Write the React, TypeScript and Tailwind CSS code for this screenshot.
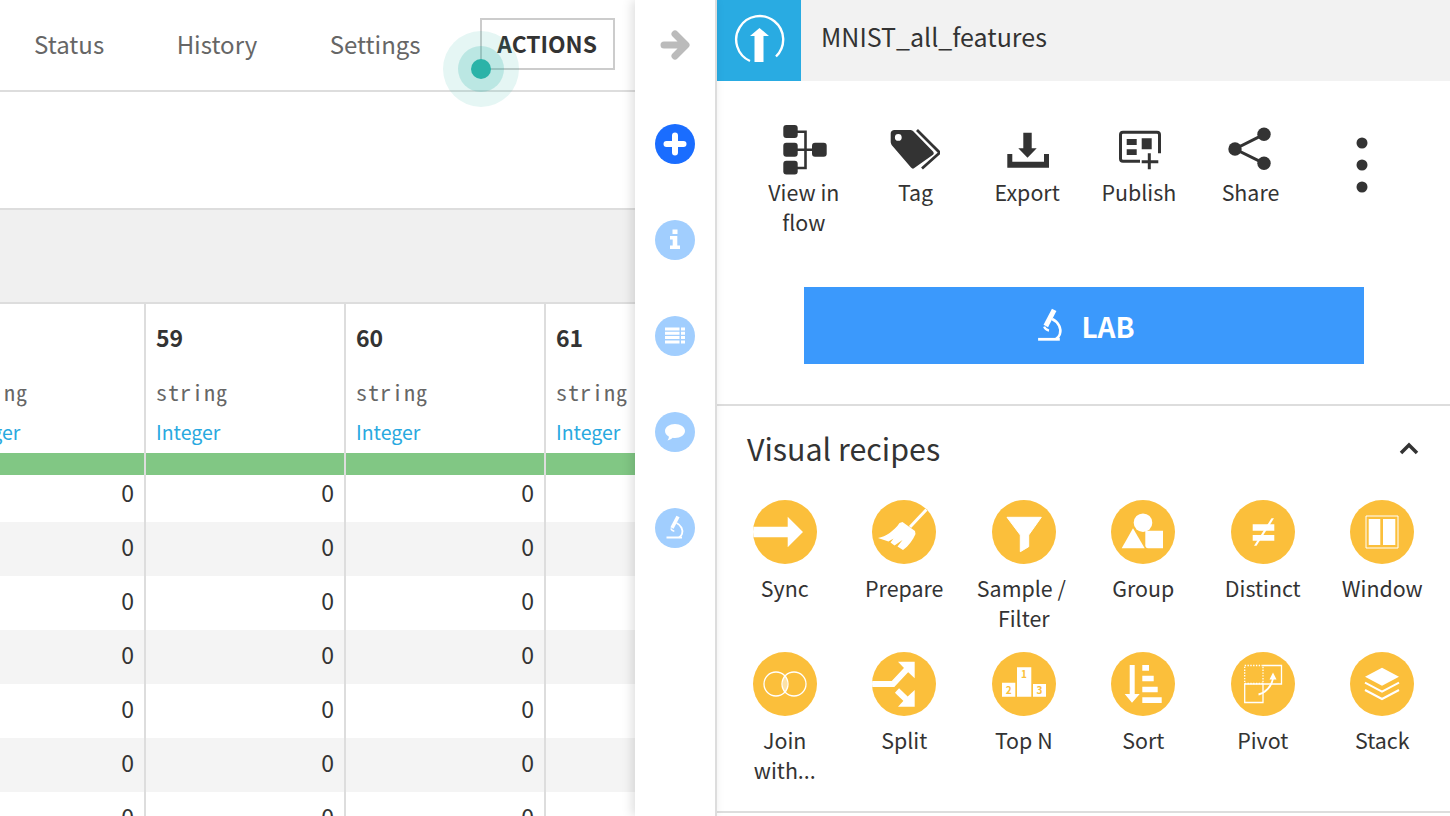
import { ReactNode } from 'react';

const sans = 'font-["Noto_Sans_CJK_SC","Noto_Sans",sans-serif]';

function Microscope({ className }: { className?: string }) {
  return (
    <svg viewBox="0 0 40 40" className={className} fill="none" stroke="#fff">
      <path d="M23 8.500 17 20" strokeWidth="3.600" />
      <path d="M21.500 15c4.500 2 7 7 5.500 11-.5 1.500-1.500 2.500-3 3.500" strokeWidth="1.800" />
      <path d="M15.800 20.500c.6 1.500 2 2.500 3.500 2.800" strokeWidth="1.600" />
      <path d="M11.500 29.500H27" strokeWidth="2" />
    </svg>
  );
}

function FlowIcon() {
  return (
    <svg viewBox="0 0 50 50" className="h-[50px] w-[50px]" fill="#333">
      <rect x="4.300" y="0" width="14.400" height="13" rx="3" />
      <rect x="4.300" y="17.700" width="14.400" height="14" rx="3" />
      <rect x="4.300" y="35.700" width="14.400" height="13.700" rx="3" />
      <rect x="33" y="17.700" width="14.700" height="14" rx="3" />
      <path d="M18 6.700h8.500v36.300H18M18 24.700h16" fill="none" stroke="#333" strokeWidth="2.600" />
    </svg>
  );
}

function TagIcon() {
  return (
    <svg viewBox="0 0 50 50" className="h-[50px] w-[50px]">
      <path
        fillRule="evenodd"
        fill="#333"
        d="M4.500 5h15.500c1.500 0 2.500.5 3.500 1.500l19.500 20c1 1.200 1 2.300 0 3.300L25 42.500c-1.300 1.500-2.800 1.500-4 0L2.500 21C1.200 19.500.7 18 .7 16.500V8.500C.7 6.300 2.300 5 4.500 5Zm3.800 4a3.400 3.400 0 1 0 0 6.800 3.400 3.400 0 0 0 0-6.800Z"
      />
      <path d="M27 5l21.500 21.500c.8.900.8 1.500 0 2.300L32 43.500" fill="none" stroke="#333" strokeWidth="2.800" />
    </svg>
  );
}

function ExportIcon() {
  return (
    <svg viewBox="0 0 50 50" className="h-[50px] w-[50px]" fill="#333">
      <path d="M21.300 7.700h8.400v15.600h5L25.500 32.700l-9.200-9.400h5Z" />
      <path d="M5.300 29h5v7.700h31.700V29h5v13.700H5.300Z" />
    </svg>
  );
}

function PublishIcon() {
  return (
    <svg viewBox="0 0 50 50" className="h-[50px] w-[50px]">
      <path d="M26 36.200H9c-1.500 0-2.500-1-2.500-2.500V9.700C6.500 8.200 7.500 7.200 9 7.200h34c1.500 0 2.500 1 2.500 2.500v18.600" fill="none" stroke="#333" strokeWidth="3" />
      <path d="M12.700 14h10v6h-10ZM27.700 13.300h10v11h-10ZM12.700 24.300h10V30h-10Z" fill="#333" />
      <path d="M35.300 28.300v16M27.700 36.700h16.600" stroke="#333" strokeWidth="3" />
    </svg>
  );
}

function ShareIcon() {
  return (
    <svg viewBox="0 0 50 50" className="h-[50px] w-[50px]" fill="#333">
      <path d="M39 9.300 10 24l29 14.300" fill="none" stroke="#333" strokeWidth="3" />
      <circle cx="39" cy="9.300" r="6.700" />
      <circle cx="10" cy="24" r="6.700" />
      <circle cx="39" cy="38.300" r="6.700" />
    </svg>
  );
}

function MoreIcon() {
  return (
    <svg viewBox="0 0 50 60" className="h-[60px] w-[50px]" fill="#333">
      <circle cx="25" cy="8" r="5.500" />
      <circle cx="25" cy="30" r="5.500" />
      <circle cx="25" cy="52" r="5.500" />
    </svg>
  );
}

const recipes: { label: string; width: string; icon: ReactNode }[] = [
  { label: 'Sync', width: 'w-[112px]', icon: <path d="M0 26.700h34.700v-10L50 32 34.700 47.300v-10H0Z" fill="#fff" /> },
  {
    label: 'Prepare',
    width: 'w-[112px]',
    icon: (
      <g fill="#fff">
        <path d="M54.500 9.500 38 27" stroke="#fff" strokeWidth="3" />
        <path d="M6 38c8-1.500 16-7 21.500-15l3-1 12.500 9 .5 3c-2.500 6-7 12-12.500 16l-5.500-3.500 5-6.500-8 5.500-4-3 3-4-5 3Z" />
      </g>
    ),
  },
  {
    label: 'Sample /\u00a0 Filter',
    width: 'w-[112px]',
    icon: <path d="M15 17.300h34.300l-12.600 17.700v11.700l-8.400 5V35Z" fill="#fff" stroke="#fff" strokeLinejoin="round" />,
  },
  {
    label: 'Group',
    width: 'w-[112px]',
    icon: (
      <g fill="#fff">
        <circle cx="32" cy="22.700" r="9.300" />
        <path d="M10.700 48.300 22 28.300l11.700 20Z" />
        <path d="M34.300 30.700H52v17.600H37c-1.500 0-2.700-1.200-2.700-2.700Z" />
      </g>
    ),
  },
  {
    label: 'Distinct',
    width: 'w-[112px]',
    icon: (
      <g>
        <path d="M21.700 24.300h21.600v6.400H21.700ZM21.700 35h21.600v5.700H21.700Z" fill="#fff" />
        <path d="M40.500 18.300h2.500L25.500 45.700H23Z" fill="#fff" />
      </g>
    ),
  },
  {
    label: 'Window',
    width: 'w-[112px]',
    icon: (
      <g fill="#fff">
        <path d="M16 16h32v32H16Z" fill="none" stroke="#fff" />
        <path d="M18.700 19h11.600v26H18.700ZM33 19h12.300v26H33Z" />
      </g>
    ),
  },
  {
    label: 'Join with...',
    width: 'w-[80px]',
    icon: (
      <g>
        <path d="M32 22.500c-3.400 2.400-3.400 16.600 0 19 3.400-2.400 3.400-16.600 0-19Z" fill="#fff" opacity=".55" />
        <g fill="none" stroke="#fff" strokeWidth="1.300">
          <circle cx="23" cy="32" r="12" />
          <circle cx="41" cy="32" r="12" />
        </g>
      </g>
    ),
  },
  {
    label: 'Split',
    width: 'w-[112px]',
    icon: (
      <g fill="#fff">
        <path d="M0 32h21L36 16" fill="none" stroke="#fff" strokeWidth="6" />
        <path d="M26 9.700h16.700v16.600L36.500 20.500 32 16Z" />
        <path d="M25 38.500 38 51" fill="none" stroke="#fff" strokeWidth="6" />
        <path d="M42.700 38v16.700H26l5.500-6 5-5Z" />
      </g>
    ),
  },
  {
    label: 'Top N',
    width: 'w-[112px]',
    icon: (
      <g>
        <path d="M10 30.700h13.300v14H10ZM25 15.300h14.300v29.400H25ZM41 32h13v12.700H41Z" fill="#fff" />
        <g fill="#fbbf3b" fontSize="10" fontWeight="700" textAnchor="middle" fontFamily="Noto Sans CJK SC, sans-serif">
          <text x="32" y="26">1</text>
          <text x="16.700" y="42">2</text>
          <text x="47.500" y="42">3</text>
        </g>
      </g>
    ),
  },
  {
    label: 'Sort',
    width: 'w-[112px]',
    icon: (
      <path d="M18.700 13h5v29h5L21 50.700 13.700 42h5ZM31.300 13H38v5.700h-6.700ZM31.300 23.700h11.400v5.600H31.300ZM31.300 34.700h15.400v5.600H31.300ZM31.300 45.300h19.400V51H31.300Z" fill="#fff" />
    ),
  },
  {
    label: 'Pivot',
    width: 'w-[112px]',
    icon: (
      <g fill="none" stroke="#fff" strokeWidth="1.300">
        <path d="M13.700 13.500h18.300v18H13.700Z" strokeDasharray="1.400 1.400" />
        <path d="M32 13.500h18.500V32H32" />
        <path d="M32 32v18.500H13.700V32Z" />
        <path d="M27.500 42.500c7-1.500 13-8 14.500-16" strokeWidth="1.800" />
        <path d="M38.500 27.500 42 20.500l3.500 7Z" fill="#fff" stroke="none" />
      </g>
    ),
  },
  {
    label: 'Stack',
    width: 'w-[112px]',
    icon: (
      <g fill="#fff">
        <path d="M32 15.700 49 24.700 32 33.700 15 24.700Z" />
        <path d="M15 30.700 32 39.700 49 30.700M15 38 32 47 49 38" fill="none" stroke="#fff" strokeWidth="2" />
      </g>
    ),
  },
];

const actions: { label: string; icon: ReactNode }[] = [
  { label: 'View in flow', icon: <FlowIcon /> },
  { label: 'Tag', icon: <TagIcon /> },
  { label: 'Export', icon: <ExportIcon /> },
  { label: 'Publish', icon: <PublishIcon /> },
  { label: 'Share', icon: <ShareIcon /> },
];

const columns = ['58', '59', '60', '61'];
const rows = [0, 1, 2, 3, 4, 5, 6];

function SideButton({ active, children }: { active?: boolean; children: ReactNode }) {
  return (
    <div className={`flex h-10 w-10 items-center justify-center rounded-full ${active ? 'bg-[#1a6dff]' : 'bg-[#a1cefe]'}`}>
      <svg viewBox="0 0 40 40" className="h-10 w-10">
        {children}
      </svg>
    </div>
  );
}

export default function App() {
  return (
    <div className={`flex h-[816px] w-[1450px] overflow-hidden bg-white text-[#333] ${sans}`}>
      {/* dataset table */}
      <div className="relative h-full w-[635px] shrink-0 overflow-hidden">
        <div className="flex h-[92px] items-start border-b-2 border-[#ddd] pl-[34px] pt-[18px]">
          <div className="flex h-[52px] items-center gap-[72.500px] text-[24px] text-[#666]">
            <span>Status</span>
            <span>History</span>
            <span>Settings</span>
          </div>
          <div className="ml-[59px] flex h-[52px] w-[135px] items-center justify-center border-2 border-[#ccc] text-[22.800px] font-semibold text-[#333]">
            ACTIONS
          </div>
        </div>

        <div className="h-[118px] border-b-2 border-[#ddd]" />
        <div className="h-[94px] border-b-2 border-[#ddd] bg-[#f0f0f0]" />

        <div className="-ml-[54px] grid w-[800px] grid-cols-[200px_200px_200px_200px]">
          {columns.map((col) => (
            <div key={col} className="flex h-[149px] flex-col border-r-2 border-[#ddd] pl-[10px]">
              <span className="mt-[18px] h-[30px] text-[23px] leading-[30px] font-semibold">{col === '58' ? '' : col}</span>
              <span className="mt-[24px] h-[30px] font-['Noto_Sans_Mono_CJK_SC','DejaVu_Sans_Mono',monospace] text-[22px] leading-[30px] tracking-[1px] text-[#666]">
                string
              </span>
              <span className="mt-[11px] text-[19.500px] leading-[30px] text-[#29a9e0]">Integer</span>
            </div>
          ))}
          {columns.map((col) => (
            <div key={col} className="h-[22px] border-r-2 border-[#ddd] bg-[#81c784]" />
          ))}
        </div>

        <div className="-ml-[54px] h-[341px] w-[800px] overflow-hidden">
          {rows.map((row) => (
            <div
              key={row}
              className={`grid grid-cols-[200px_200px_200px_200px] ${row === 0 ? 'h-[47px]' : 'h-[54px]'} ${row % 2 === 1 ? 'bg-[#f4f4f4]' : 'bg-white'}`}
            >
              {columns.map((col, i) => (
                <div
                  key={col}
                  className={`border-r-2 border-[#ddd] pr-[10px] text-right text-[23px] leading-[36px] ${row === 0 ? '-mt-[1px]' : 'pt-[6px]'}`}
                >
                  {i === 3 ? '' : '0'}
                </div>
              ))}
            </div>
          ))}
        </div>

        {/* pulse marker over the actions button */}
        <div className="absolute left-[443px] top-[31px] flex h-[76px] w-[76px] items-center justify-center rounded-full bg-[#2bb3a8]/12">
          <div className="flex h-[46px] w-[46px] items-center justify-center rounded-full bg-[#2bb3a8]/22">
            <div className="h-[20px] w-[20px] rounded-full bg-[#2bb3a8]" />
          </div>
        </div>
      </div>

      {/* icon rail */}
      <div className="relative z-10 flex h-full w-[82px] shrink-0 flex-col items-center border-r-2 border-[#ddd] bg-white shadow-[-3px_0_10px_rgba(0,0,0,0.13)]">
        <svg viewBox="0 0 40 40" className="mt-[25px] h-10 w-10" fill="none" stroke="#bbb" strokeWidth="7" strokeLinejoin="round" strokeLinecap="round">
          <path d="M9 20h21M20 9l11 11-11 11" />
        </svg>
        <div className="mt-[59px] flex flex-col gap-14">
          <SideButton active>
            <path d="M20 11.500v17M11.500 20h17" stroke="#fff" strokeWidth="6" strokeLinecap="round" />
          </SideButton>
          <SideButton>
            <path d="M17.500 9.500h5v4.500h-5ZM15 16h7.300v9.500H25V29H15v-3.500h2.700v-6H15Z" fill="#fff" />
          </SideButton>
          <SideButton>
            <path d="M10 11.500h14.500v3H10ZM26 11.500h4v3h-4ZM10 15.800h14.500v3H10ZM26 15.800h4v3h-4ZM10 20.100h14.500v3H10ZM26 20.100h4v3h-4ZM10 24.400h14.500v3H10ZM26 24.400h4v3h-4Z" fill="#fff" />
          </SideButton>
          <SideButton>
            <path d="M20 12c5.500 0 10 3 10 7s-4.500 7-10 7c-.8 0-1.600-.1-2.300-.2-1.500 1.300-3.500 2.300-5.200 2.700.8-1.200 1.300-2.500 1.500-3.800-2.400-1.300-4-3.300-4-5.700 0-4 4.500-7 10-7Z" fill="#fff" />
          </SideButton>
          <div className="flex h-10 w-10 items-center justify-center rounded-full bg-[#a1cefe]">
            <Microscope className="h-10 w-10" />
          </div>
        </div>
      </div>

      {/* right hand panel */}
      <div className="h-full min-w-0 flex-1">
        <div className="flex h-[81px] bg-[#f2f2f2]">
          <div className="flex h-[81px] w-[84px] items-center justify-center bg-[#29abe2]">
            <svg viewBox="0 0 84 81" className="h-[81px] w-[84px]">
              <path d="M59 56.500A23.500 23.500 0 1 0 33 61" fill="none" stroke="#fff" strokeWidth="2.400" />
              <path d="M42.500 28 52 36h-5.500v26h-9V36H33Z" fill="#fff" />
            </svg>
          </div>
          <span className="ml-5 mt-[18px] text-[25px] leading-[36px]">MNIST_all_features</span>
        </div>

        <div className="h-[325px] border-b-2 border-[#ddd]">
          <div className="ml-[31px] grid h-[162px] w-[670px] grid-cols-6 pt-[44px]">
            {actions.map((a) => (
              <div key={a.label} className="flex flex-col items-center text-center text-[21.400px] leading-[30px]">
                <div className="h-[50px]">{a.icon}</div>
                <span className="mt-[2px] w-[90px]">{a.label}</span>
              </div>
            ))}
            <div className="flex justify-center pt-[10px]">
              <MoreIcon />
            </div>
          </div>
          <div className="ml-[87px] mt-[44px] flex h-[77px] w-[560px] items-center justify-center gap-[3px] bg-[#3b99fc] pr-[11px] text-[28px] font-bold text-white">
            <Microscope className="h-[56px] w-[56px]" />
            <span>LAB</span>
          </div>
        </div>

        <div className="border-b-2 border-[#ddd] pb-[7px]">
          <div className="flex h-[94px] items-start justify-between pl-[30px] pr-[29px] pt-[22px]">
            <span className="text-[30.400px] leading-[40px]">Visual recipes</span>
            <svg viewBox="0 0 24 24" className="mt-[9px] h-6 w-6" fill="none" stroke="#333" strokeWidth="3.500">
              <path d="M4 16l8-8 8 8" />
            </svg>
          </div>
          <div className="ml-[8px] grid w-[717px] grid-cols-6 auto-rows-[152px]">
            {recipes.map((r) => (
              <div key={r.label} className="flex flex-col items-center text-center text-[21.400px] leading-[30px]">
                <svg viewBox="0 0 64 64" className="h-16 w-16 shrink-0 rounded-full bg-[#fbbf3b]">
                  {r.icon}
                </svg>
                <span className={`mt-[9px] ${r.width}`}>{r.label}</span>
              </div>
            ))}
          </div>
        </div>
      </div>
    </div>
  );
}
